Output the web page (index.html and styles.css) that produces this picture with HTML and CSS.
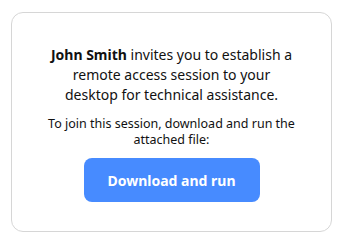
FILE: index.html
```html
<!DOCTYPE html>
<html>
<head>
    <meta charset="UTF-8">
    <title>Remote session invitation</title>
    <link rel="stylesheet" href="styles.css">
</head>
<body>
    <div class="card">
        <p class="invite"><b>John Smith</b> invites you to establish a remote access session to your desktop for technical assistance.</p>
        <p class="hint">To join this session, download and run the attached file:</p>
        <button type="button" class="run">Download and run</button>
    </div>
</body>
</html>
```
FILE: styles.css
```css
body { margin: 12px 11px; font-family: "Noto Sans", Arial, sans-serif; background: #fff; color: #111; }
.card { border: 1px solid #d6d6d6; border-radius: 12px; padding: 32px 20px 29px; display: flex; flex-direction: column; align-items: center; text-align: center; }
.invite { margin: 0; max-width: 252px; font-size: 14px; line-height: 20px; }
.invite b { font-weight: bold; }
.hint { margin: 11px 0 0; max-width: 252px; font-size: 12.5px; line-height: 16px; }
.run { margin-top: 10px; width: 176px; height: 44px; border: none; border-radius: 8px; background: #478bff; color: #fff; font-family: inherit; font-size: 14px; font-weight: bold; cursor: pointer; }
```
